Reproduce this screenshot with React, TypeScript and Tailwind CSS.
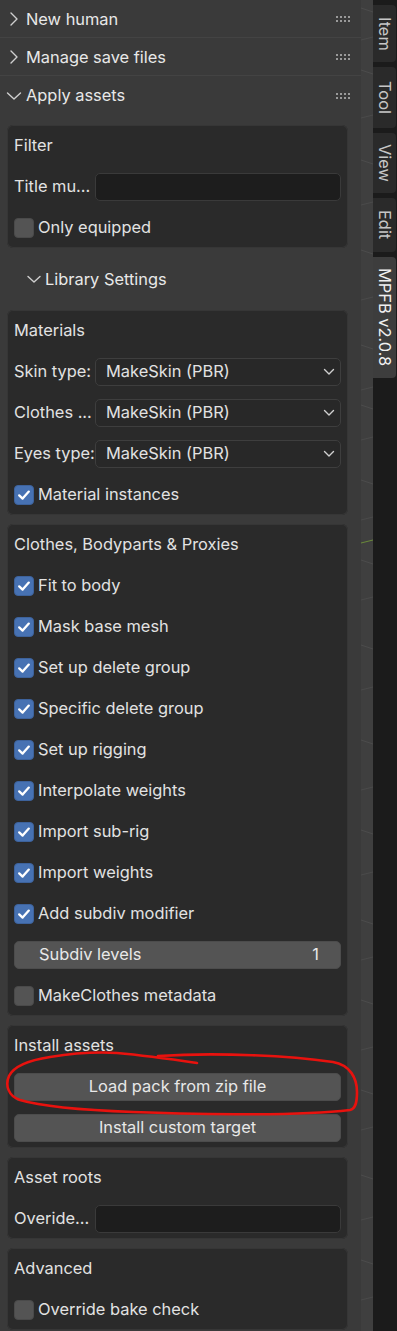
import React from "react";

const font = { fontFamily: "Inter, 'Noto Sans', sans-serif" };

function ChevronRight() {
  return (
    <svg width="18" height="18" viewBox="0 0 18 18" className="shrink-0">
      <path d="M6 3 L12 9 L6 15" fill="none" stroke="#cfcfcf" strokeWidth="1.4" strokeLinecap="round" strokeLinejoin="round" />
    </svg>
  );
}

function ChevronDown({ small }: { small?: boolean }) {
  return (
    <svg width="18" height="18" viewBox="0 0 18 18" className="shrink-0">
      <path
        d={small ? "M3 6.5 L9 12 L15 6.5" : "M2.5 6 L9 12 L15.5 6"}
        fill="none"
        stroke="#cfcfcf"
        strokeWidth="1.4"
        strokeLinecap="round"
        strokeLinejoin="round"
      />
    </svg>
  );
}

function Grip() {
  const dots = [];
  for (let r = 0; r < 2; r++)
    for (let c = 0; c < 4; c++)
      dots.push(<rect key={`${r}-${c}`} x={c * 4} y={r * 4} width="2" height="2" fill="#9a9a9a" />);
  return (
    <svg width="14" height="6" viewBox="0 0 14 6" className="shrink-0">
      {dots}
    </svg>
  );
}

function Header({ title, open, border }: { title: string; open?: boolean; border?: boolean }) {
  return (
    <div className={"h-[38px] flex items-center pl-[5px] pr-[11px] pt-[1px]" + (border ? " border-b border-[#434343]" : "")}>
      <div className="w-[21px] flex items-center">{open ? <ChevronDown /> : <ChevronRight />}</div>
      <span className="text-[16.4px] text-[#e8e8e8] flex-1">{title}</span>
      <Grip />
    </div>
  );
}

function Panel({ children }: { children: React.ReactNode }) {
  return (
    <div className="w-[341px] rounded-[6px] bg-[#2a2a2a] shadow-[inset_0_0_0_1px_#363636] px-[7px]">{children}</div>
  );
}

function Row({ children }: { children: React.ReactNode }) {
  return <div className="h-[41px] flex items-center">{children}</div>;
}

function Title({ text }: { text: string }) {
  return (
    <Row>
      <span className="text-[16.4px] text-[#e2e2e2]">{text}</span>
    </Row>
  );
}

function Check({ label, checked }: { label: string; checked?: boolean }) {
  return (
    <Row>
      <div
        className={
          "w-[20px] h-[20px] rounded-[4px] flex items-center justify-center shrink-0 border " +
          (checked ? "bg-[#4772b3] border-[#3d629b]" : "bg-[#545454] border-[#4a4a4a]")
        }
      >
        {checked && (
          <svg width="16" height="16" viewBox="0 0 16 16">
            <path d="M3.2 8.4 L6.6 11.6 L12.8 4.6" fill="none" stroke="#ffffff" strokeWidth="2.3" strokeLinecap="round" strokeLinejoin="round" />
          </svg>
        )}
      </div>
      <span className="ml-[4px] text-[16.4px] text-[#e2e2e2]">{label}</span>
    </Row>
  );
}

function TextField({ label }: { label: string }) {
  return (
    <Row>
      <span className="w-[81px] text-[16.4px] text-[#e2e2e2] whitespace-nowrap">{label}</span>
      <div className="flex-1 h-[28px] rounded-[5px] bg-[#1d1d1d] border border-[#3a3a3a]" />
    </Row>
  );
}

function Dropdown({ label }: { label: string }) {
  return (
    <Row>
      <span className="w-[81px] text-[16.4px] text-[#e2e2e2] whitespace-nowrap">{label}</span>
      <div className="flex-1 h-[28px] rounded-[5px] bg-[#282828] border border-[#3e3e3e] flex items-center pl-[10px] pr-[5px]">
        <span className="flex-1 text-[16.4px] text-[#e2e2e2]">MakeSkin (PBR)</span>
        <svg width="12" height="8" viewBox="0 0 12 8">
          <path d="M1.5 1.5 L6 6 L10.5 1.5" fill="none" stroke="#d0d0d0" strokeWidth="1.4" strokeLinecap="round" strokeLinejoin="round" />
        </svg>
      </div>
    </Row>
  );
}

function Button({ label }: { label: string }) {
  return (
    <Row>
      <div className="w-full h-[28px] rounded-[5px] bg-[#545454] border border-[#4c4c4c] flex items-center justify-center text-[16.4px] text-[#e8e8e8]">
        {label}
      </div>
    </Row>
  );
}

function Tab({ label, h, active }: { label: string; h: string; active?: boolean }) {
  return (
    <div
      className={
        "w-[23px] shrink-0 flex items-center justify-center rounded-r-[4px] " +
        h +
        (active ? " bg-[#3d3d3d] text-[#f0f0f0]" : " bg-[#2a2a2a] text-[#c6c6c6]")
      }
    >
      <span className="[writing-mode:vertical-rl] text-[16.4px] leading-none whitespace-nowrap">{label}</span>
    </div>
  );
}

export default function App() {
  const clothes = [
    "Fit to body",
    "Mask base mesh",
    "Set up delete group",
    "Specific delete group",
    "Set up rigging",
    "Interpolate weights",
    "Import sub-rig",
    "Import weights",
    "Add subdiv modifier",
  ];
  const stripLines = [8, 40, 70, 118, 160, 205, 250, 300, 345, 390, 405, 440, 480, 520, 560, 600, 645, 690, 740, 790, 830, 875, 920, 960, 1000, 1050, 1090, 1130, 1175, 1220, 1260, 1300];
  return (
    <div className="relative w-[397px] h-[1331px] flex overflow-hidden bg-[#3a3a3a]" style={font}>
      {/* main properties panel */}
      <div className="w-[361px] shrink-0 h-full bg-[#3a3a3a]">
        <Header title="New human" border />
        <Header title="Manage save files" border />
        <Header title="Apply assets" open />
        <div className="px-[7px] pt-[11px]">
          <Panel>
            <Title text="Filter" />
            <TextField label="Title mu..." />
            <Check label="Only equipped" />
          </Panel>
          <div className="h-[62px] flex items-center pl-[18px]">
            <ChevronDown small />
            <span className="ml-[2px] text-[16.4px] text-[#e8e8e8]">Library Settings</span>
          </div>
          <Panel>
            <Title text="Materials" />
            <Dropdown label="Skin type:" />
            <Dropdown label="Clothes ..." />
            <Dropdown label="Eyes type:" />
            <Check label="Material instances" checked />
          </Panel>
          <div className="h-[9px]" />
          <Panel>
            <Title text="Clothes, Bodyparts & Proxies" />
            {clothes.map((c) => (
              <Check key={c} label={c} checked />
            ))}
            <Row>
              <div className="w-full h-[28px] rounded-[5px] bg-[#545454] border border-[#4c4c4c] flex items-center pl-[24px] pr-[21px] text-[16.4px] text-[#e8e8e8]">
                <span className="flex-1">Subdiv levels</span>
                <span>1</span>
              </div>
            </Row>
            <Check label="MakeClothes metadata" />
          </Panel>
          <div className="h-[9px]" />
          <Panel>
            <Title text="Install assets" />
            <Button label="Load pack from zip file" />
            <Button label="Install custom target" />
          </Panel>
          <div className="h-[9px]" />
          <Panel>
            <Title text="Asset roots" />
            <TextField label="Overide..." />
          </Panel>
          <div className="h-[9px]" />
          <Panel>
            <Title text="Advanced" />
            <Check label="Override bake check" />
          </Panel>
        </div>
      </div>
      {/* viewport strip */}
      <div className="w-[12px] shrink-0 h-full bg-[#3f3f3f]">
        <svg width="12" height="1331" viewBox="0 0 12 1331">
          {stripLines.map((y, i) => (
            <line key={y} x1="0" y1={y} x2="12" y2={y + (i % 2 === 0 ? 4 : -3)} stroke="#4b4b4b" strokeWidth="1" />
          ))}
          <line x1="0" y1="543" x2="12" y2="540" stroke="#6a8a3a" strokeWidth="1" />
        </svg>
      </div>
      {/* tab column */}
      <div className="w-[24px] shrink-0 h-full bg-[#1b1b1b] flex flex-col pt-[5px] gap-[5px]">
        <Tab label="Item" h="h-[57px]" />
        <Tab label="Tool" h="h-[61px]" />
        <Tab label="View" h="h-[60px]" />
        <Tab label="Edit" h="h-[54px]" />
        <Tab label="MPFB v2.0.8" h="h-[121px]" active />
      </div>
      {/* red annotation */}
      <svg className="absolute left-0 top-0 pointer-events-none" width="397" height="1331" viewBox="0 0 397 1331">
        <path
          d="M158,1056 C220,1052 290,1056 333,1062 C350,1065 357,1078 357,1092 C357,1104 355,1109 350,1110 C300,1116 220,1115 133,1112 C80,1110 40,1106 20,1100 C8,1096 5,1085 9,1076 C14,1066 30,1060 50,1057 C75,1053 100,1052 117,1053 C140,1055 170,1059 197,1063"
          fill="none"
          stroke="#e8120e"
          strokeWidth="2.6"
          strokeLinecap="round"
          strokeLinejoin="round"
        />
      </svg>
    </div>
  );
}
